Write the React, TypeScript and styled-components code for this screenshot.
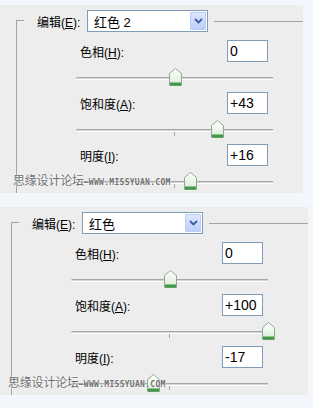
import styled, { createGlobalStyle } from "styled-components";

const GlobalStyle = createGlobalStyle`
    html, body {
        margin: 0;
        padding: 0;
        background: #f3f6fb;
    }
    body {
        font-family: "Liberation Sans", "Noto Sans CJK SC", sans-serif;
        font-size: 12px;
        color: #000;
    }
`;

interface IField {
    label: string;
    key: string;
    value: number;
}

interface IPanelData {
    inset: number;
    width: number;
    edit: string;
    fields: IField[];
}

const PANELS: IPanelData[] = [
    {
        inset: 16,
        width: 303,
        edit: "红色 2",
        fields: [
            { label: "色相", key: "H", value: 0 },
            { label: "饱和度", key: "A", value: 43 },
            { label: "明度", key: "I", value: 16 },
        ],
    },
    {
        inset: 11,
        width: 308,
        edit: "红色",
        fields: [
            { label: "色相", key: "H", value: 0 },
            { label: "饱和度", key: "A", value: 100 },
            { label: "明度", key: "I", value: -17 },
        ],
    },
];

const Page = styled.div`
    display: flex;
    flex-direction: column;
    gap: 14px;
    padding-top: 5px;
    width: 313px;
    height: 408px;
    box-sizing: border-box;
`;

const Panel = styled.div<{ $width: number; $inset: number }>`
    position: relative;
    width: ${(p) => p.$width}px;
    height: 188px;
    box-sizing: border-box;
    padding: 5px 0 0 ${(p) => p.$inset}px;
    background: #ededed;
    overflow: hidden;
`;

const Header = styled.div`
    display: flex;
    align-items: center;
    height: 22px;
`;

const Stub = styled.div`
    align-self: flex-end;
    width: 8px;
    height: 12px;
    border-top: 1px solid #a3a3a3;
    border-left: 1px solid #a3a3a3;
    box-sizing: border-box;
`;

const EditLabel = styled.span`
    margin-left: 13px;
    width: 50px;
    white-space: nowrap;
`;

const Dropdown = styled.div`
    display: flex;
    align-items: center;
    justify-content: space-between;
    width: 121px;
    height: 22px;
    box-sizing: border-box;
    border: 1px solid #7f9db9;
    background: #fff;
    padding: 0 1px 0 6px;
    font-size: 13px;
`;

const ArrowButton = styled.div`
    width: 16px;
    height: 18px;
    display: flex;
    align-items: center;
    justify-content: center;
    box-sizing: border-box;
    border: 1px solid #b9cdf6;
    border-radius: 1px;
    background: linear-gradient(#dce7fd, #bccffa);
`;

const HeaderLine = styled.div`
    flex: 1;
    height: 1px;
    margin: 0 0 0 6px;
    background: #a3a3a3;
`;

const Body = styled.div`
    border-left: 1px solid #a3a3a3;
    height: 200px;
    padding-top: 8px;
    box-sizing: border-box;
`;

const FieldRow = styled.div`
    display: grid;
    grid-template-columns: 1fr 41px;
    align-items: center;
    margin-left: 63px;
    width: 188px;
    height: 22px;
`;

const FieldLabel = styled.span`
    white-space: nowrap;
`;

const Key = styled.span`
    text-decoration: underline;
`;

const ValueBox = styled.div`
    height: 22px;
    box-sizing: border-box;
    border: 1px solid #7f9db9;
    background: #fff;
    padding-left: 2px;
    font-size: 14px;
    line-height: 20px;
`;

const SliderArea = styled.div`
    position: relative;
    margin-left: 59px;
    width: 197px;
    height: 30px;
`;

const Track = styled.div`
    position: absolute;
    top: 15px;
    left: 0;
    right: 0;
    height: 1px;
    border-top: 1px solid #a6a6a6;
    border-bottom: 1px solid #ffffff;
    background: #d4d4d4;
    border-radius: 2px 0 0 2px;
`;

const Tick = styled.div`
    position: absolute;
    top: 18px;
    left: 98px;
    width: 1px;
    height: 4px;
    background: #a6a6a6;
`;

const Thumb = styled.svg`
    position: absolute;
    top: 6px;
    width: 13px;
    height: 18px;
    margin-left: -6px;
`;

const Watermark = styled.div<{ $inset: number }>`
    position: absolute;
    left: ${(p) => p.$inset - 3}px;
    top: 166px;
    display: flex;
    align-items: center;
    color: #6e6e6e;
    text-shadow: 0 0 2px #fff, 0 0 1px #fff;
    pointer-events: none;
`;

const WaterCn = styled.span`
    font-family: "Noto Sans CJK SC", sans-serif;
    font-size: 12px;
    letter-spacing: -0.2px;
`;

const WaterDash = styled.span`
    width: 5px;
    height: 1px;
    margin-top: 6px;
    background: #7a7a7a;
`;

const WaterEn = styled.span`
    font-family: "DejaVu Sans Mono", monospace;
    font-size: 8px;
    font-weight: bold;
    letter-spacing: 0.3px;
    margin-top: 5px;
`;

function Chevron() {
    return (
        <svg width="9" height="6" viewBox="0 0 9 6">
            <path d="M1 1 L4.5 4.5 L8 1" stroke="#3b5aa8" strokeWidth="1.8" fill="none" />
        </svg>
    );
}

function SliderThumb(props: { value: number }) {
    const left = ((props.value + 100) / 200) * 197;
    return (
        <Thumb viewBox="0 0 13 18" style={{ left: left + "px" }}>
            <defs>
                <linearGradient id="tg" x1="0" y1="0" x2="0" y2="1">
                    <stop offset="0" stopColor="#ffffff" />
                    <stop offset="1" stopColor="#d8ecd6" />
                </linearGradient>
            </defs>
            <path d="M6.5 0.5 L12.5 5.5 L12.5 17.5 L0.5 17.5 L0.5 5.5 Z" fill="url(#tg)" stroke="#8fa88f" />
            <rect x="1" y="14.5" width="11" height="3" fill="#3f9a45" />
        </Thumb>
    );
}

function EditPanel(props: { data: IPanelData }) {
    const d = props.data;
    return (
        <Panel $width={d.width} $inset={d.inset}>
            <Header>
                <Stub />
                <EditLabel>
                    编辑(<Key>E</Key>):
                </EditLabel>
                <Dropdown>
                    <span>{d.edit}</span>
                    <ArrowButton>
                        <Chevron />
                    </ArrowButton>
                </Dropdown>
                <HeaderLine />
            </Header>
            <Body>
                {d.fields.map((f) => (
                    <div key={f.key}>
                        <FieldRow>
                            <FieldLabel>
                                {f.label}(<Key>{f.key}</Key>):
                            </FieldLabel>
                            <ValueBox>{f.value > 0 ? "+" + f.value : String(f.value)}</ValueBox>
                        </FieldRow>
                        <SliderArea>
                            <Track />
                            <Tick />
                            <SliderThumb value={f.value} />
                        </SliderArea>
                    </div>
                ))}
            </Body>
            <Watermark $inset={d.inset}>
                <WaterCn>思缘设计论坛</WaterCn>
                <WaterDash />
                <WaterEn>WWW.MISSYUAN.COM</WaterEn>
            </Watermark>
        </Panel>
    );
}

export default function App() {
    return (
        <>
            <GlobalStyle />
            <Page>
                {PANELS.map((p, i) => (
                    <EditPanel key={i} data={p} />
                ))}
            </Page>
        </>
    );
}
